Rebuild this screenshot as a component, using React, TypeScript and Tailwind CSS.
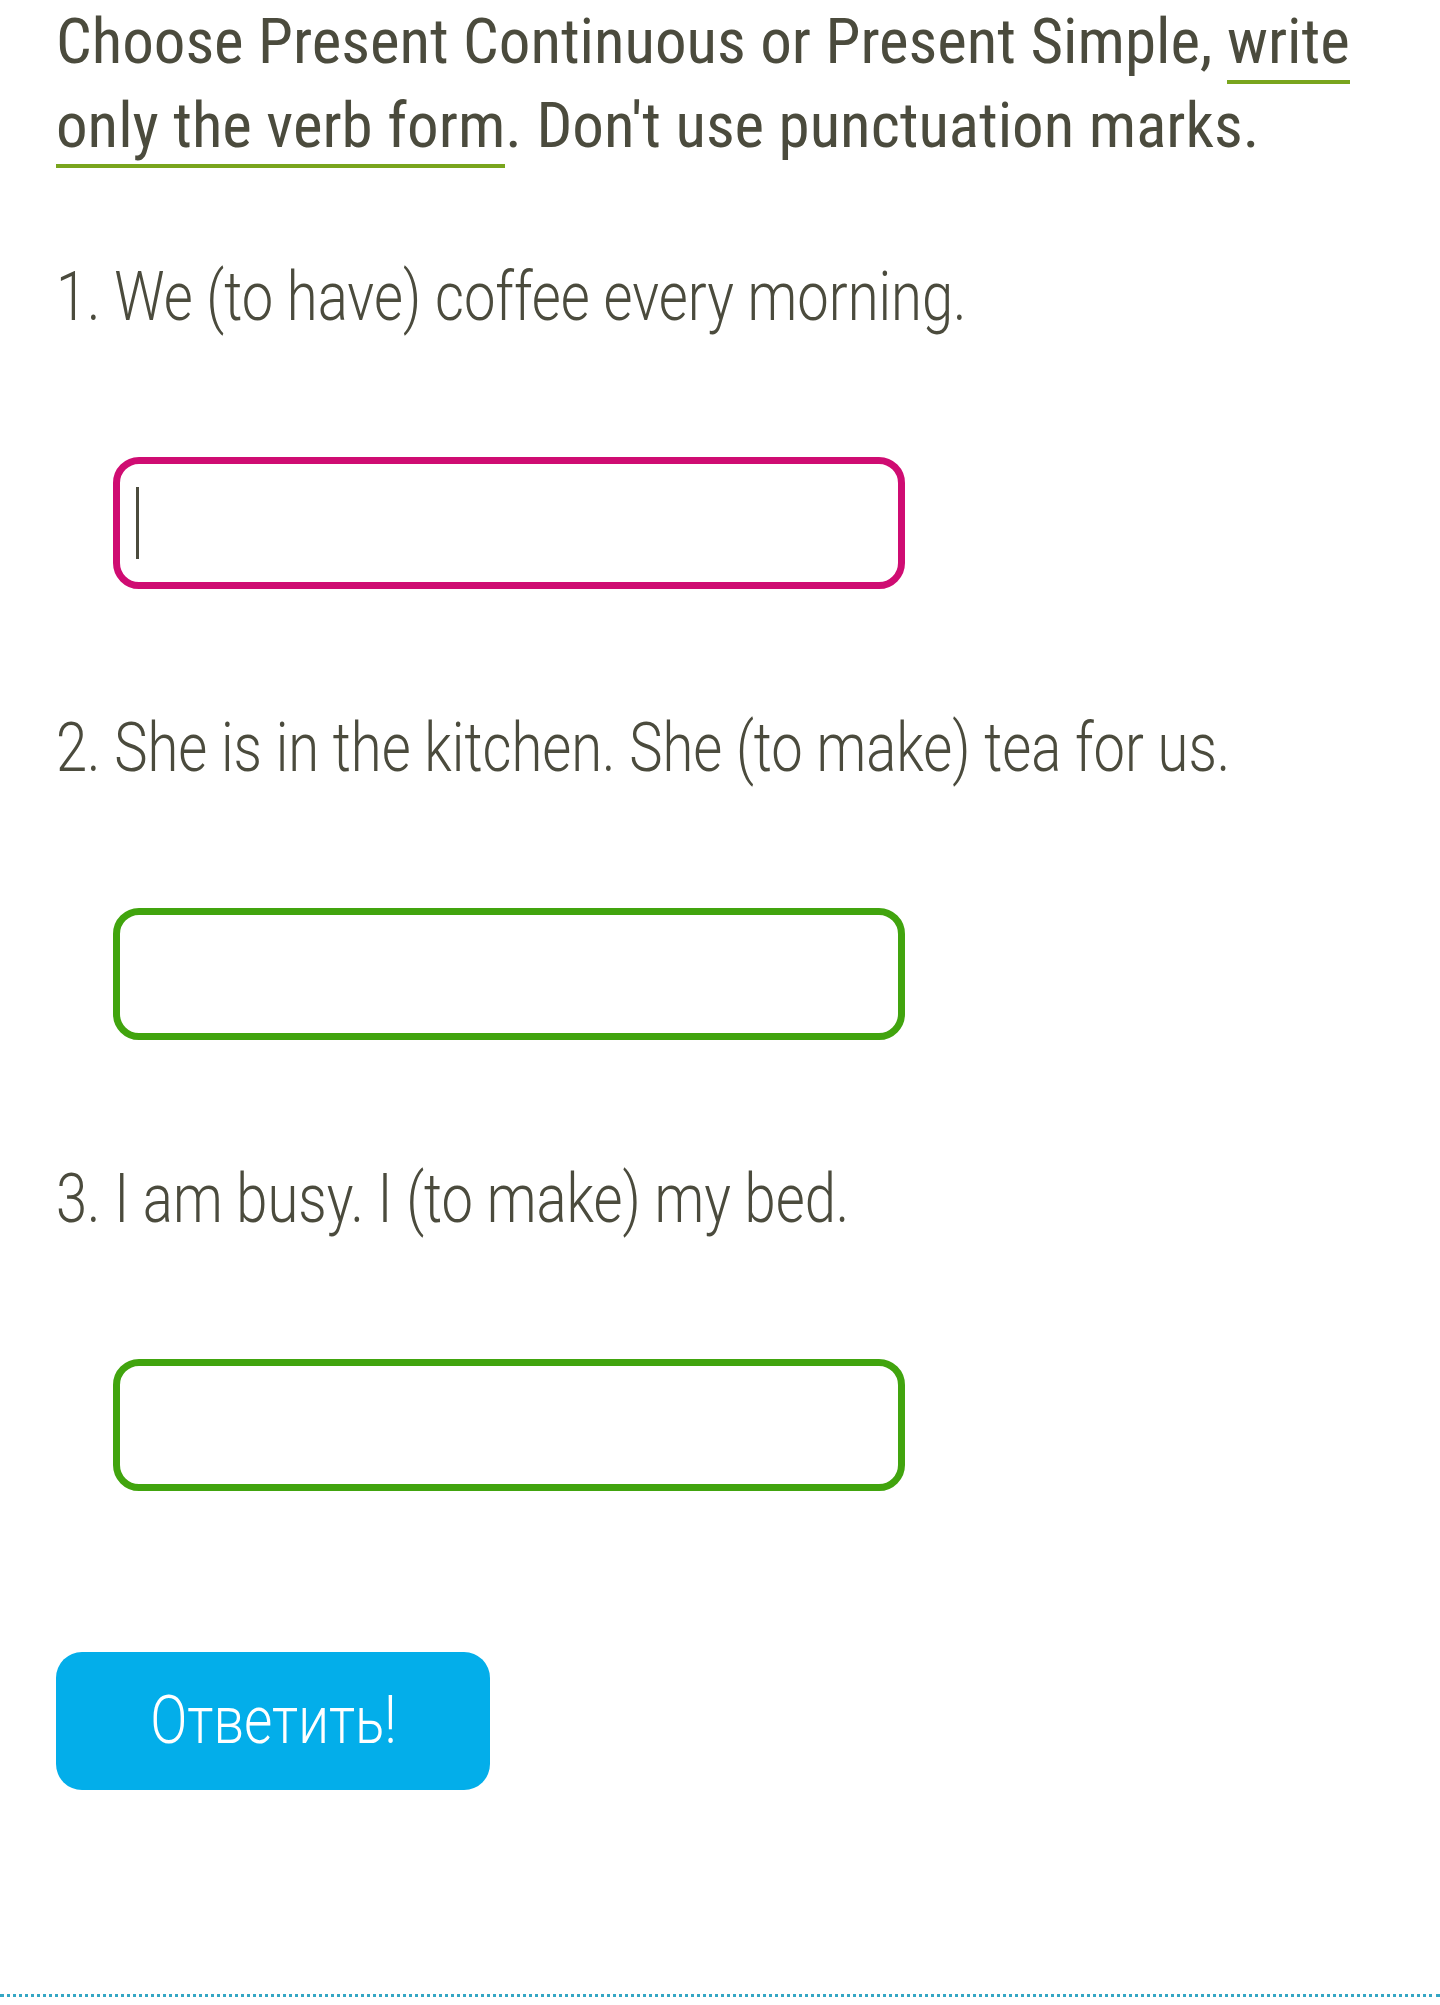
import React from "react";

const headFont = "font-['Roboto_Condensed','Roboto',sans-serif] [font-stretch:condensed]";
const lightFont = "font-['Roboto',sans-serif] font-light";

function Item({ text, active }: { text: string; active?: boolean }) {
  return (
    <div className="flex flex-col">
      <p className={`${lightFont} text-[68px] leading-[80px] text-[#4b4b3d] whitespace-nowrap`}>
        <span className="inline-block origin-left scale-x-[0.825]">{text}</span>
      </p>
      <div className="pl-[57px] mt-[120px]">
        <div
          className={`w-[792px] h-[132px] rounded-[26px] border-[7px] bg-white flex items-center pl-[16px] ${
            active ? "border-[#cf0c72]" : "border-[#41a40e]"
          }`}
        >
          {active ? <div className="w-[3px] h-[72px] bg-[#4b4b3d]" /> : null}
        </div>
      </div>
    </div>
  );
}

export default function App() {
  return (
    <div className="w-full h-[2005px] bg-white flex flex-col">
      <div className="px-[56px] flex flex-col">
        <p className={`${headFont} font-normal text-[63px] leading-[84px] text-[#4b4b3d]`}>
          Choose Present Continuous or Present Simple,{" "}
          <span className="border-b-4 border-[#79a51d] pb-[2px]">write only the verb form</span>. Don't use
          punctuation marks.
        </p>
        <div className="mt-[89px] flex flex-col gap-[119px]">
          <Item text="1. We (to have) coffee every morning." active />
          <Item text="2. She is in the kitchen. She (to make) tea for us." />
          <Item text="3. I am busy. I (to make) my bed." />
        </div>
        <div className="mt-[161px]">
          <button
            className={`${lightFont} w-[434px] h-[138px] rounded-[26px] bg-[#03aeea] text-white text-[66px] leading-none flex items-center justify-center`}
          >
            <span className="inline-block scale-x-[0.83]">Ответить!</span>
          </button>
        </div>
      </div>
      <div className="mt-auto mb-[8px] h-0 border-t-[3px] border-dotted border-[#35a7c4]" />
    </div>
  );
}
